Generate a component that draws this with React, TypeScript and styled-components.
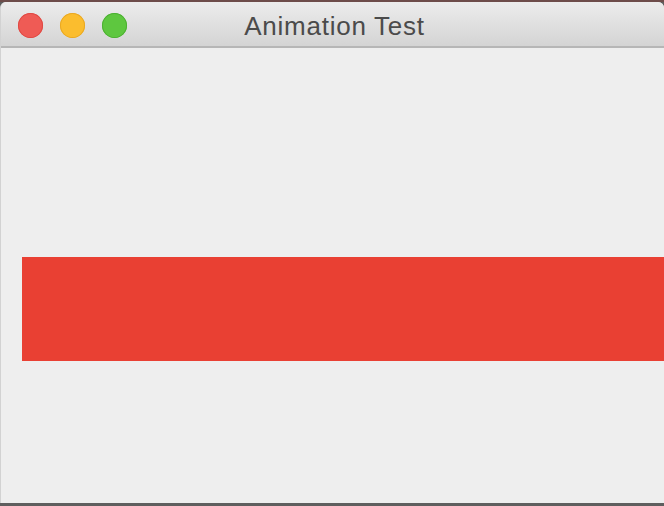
import React from 'react';
import styled, { createGlobalStyle } from "styled-components";

const Global = createGlobalStyle`
  html, body {
    margin: 0;
    padding: 0;
    background: #6d4c4a;
  }
  #root {
    height: 506px;
  }
`

const Frame = styled.div`
  height: 506px;
  box-sizing: border-box;
  border-top: 2px solid #6d4c4a;
  border-bottom: 3px solid #5e5e5e;
  background: #5e5e5e;
  display: flex;
  flex-direction: column;
`

const Window = styled.div`
  flex: 1;
  display: flex;
  flex-direction: column;
  background: #eeeeee;
  border-left: 1px solid #d2d2d2;
  border-radius: 6px 6px 0 0;
  overflow: hidden;
`

const TitleBar = styled.div`
  height: 44px;
  flex: none;
  position: relative;
  display: flex;
  align-items: center;
  justify-content: center;
  background: linear-gradient(#ececec, #d4d4d4);
  border-bottom: 2px solid #b6b6b6;
  box-sizing: content-box;
`

const Lights = styled.div`
  position: absolute;
  left: 17px;
  top: 11px;
  display: flex;
  gap: 17px;
`

const Light = styled.span<{ $fill: string; $edge: string }>`
  width: 25px;
  height: 25px;
  border-radius: 50%;
  background: ${p => p.$fill};
  box-shadow: inset 0 0 0 1px ${p => p.$edge};
`

const Title = styled.div`
  font-family: "Liberation Sans", Arial, sans-serif;
  font-size: 26px;
  letter-spacing: 0.75px;
  color: #4b4b4b;
  margin-left: 4px;
  margin-top: 4px;
`

const Content = styled.div`
  flex: 1;
  padding-top: 209px;
  padding-left: 21px;
`

const Bar = styled.div`
  height: 104px;
  background: #e94033;
`

export default function App() {
  return (
    <>
      <Global />
      <Frame>
        <Window>
          <TitleBar>
            <Lights>
              <Light $fill="#ef5b55" $edge="#df4a44" />
              <Light $fill="#fbbd2e" $edge="#e9a823" />
              <Light $fill="#5ec73f" $edge="#4cb032" />
            </Lights>
            <Title>Animation Test</Title>
          </TitleBar>
          <Content>
            <Bar />
          </Content>
        </Window>
      </Frame>
    </>
  );
}
